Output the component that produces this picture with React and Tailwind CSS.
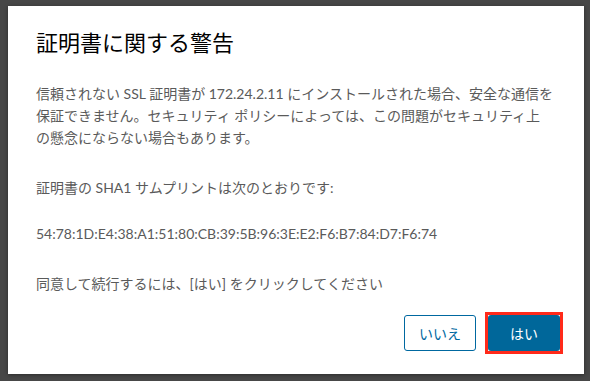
export default function App() {
  return (
    <div
      className="w-[590px] h-[381px] bg-[#474747] pt-[6px] pl-[8px]"
      style={{ fontFamily: '"Lato", "Noto Sans CJK JP", sans-serif' }}
    >
      <div className="w-[576px] h-[368px] bg-white flex flex-col pl-[28px] pr-[21px] pt-[22px] pb-[20px] shadow-[0_1px_4px_rgba(0,0,0,0.4)]">
        <h1 className="text-[22px] leading-[30px] text-[#000000] font-normal">
          証明書に関する警告
        </h1>

        <div className="mt-[25px] text-[14px] leading-[22px] text-[#5a5a5a]">
          <p className="whitespace-nowrap">
            信頼されない SSL 証明書が 172.24.2.11 にインストールされた場合、安全な通信を
            <br />
            保証できません。セキュリティ ポリシーによっては、この問題がセキュリティ上
            <br />
            の懸念にならない場合もあります。
          </p>
          <p className="mt-[28px]">証明書の SHA1 サムプリントは次のとおりです:</p>
          <p className="mt-[24px]">
            54:78:1D:E4:38:A1:51:80:CB:39:5B:96:3E:E2:F6:B7:84:D7:F6:74
          </p>
          <p className="mt-[28px]">同意して続行するには、[はい] をクリックしてください</p>
        </div>

        <div className="mt-auto flex justify-end items-center gap-[9px]">
          <button className="w-[72px] h-[36px] rounded-[3px] border border-[#0068a0] text-[#0068a0] text-[14px] bg-white">
            いいえ
          </button>
          <div className="border-[3px] border-[#ff2a1a]">
            <button className="block w-[72px] h-[36px] rounded-[3px] bg-[#00679a] text-white text-[14px]">
              はい
            </button>
          </div>
        </div>
      </div>
    </div>
  );
}
